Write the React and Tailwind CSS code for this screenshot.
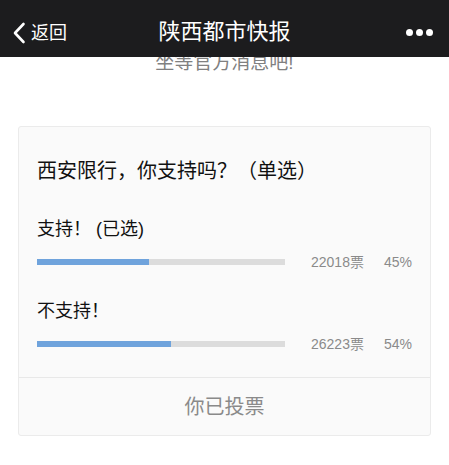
const font = { fontFamily: '"Liberation Sans", "Noto Sans CJK SC", sans-serif' };

function Bar({ pct }) {
  return (
    <div className="h-[6px] w-[248px] bg-[#dcdcdc]">
      <div className="h-full bg-[#6fa3dc]" style={{ width: `${pct}%` }} />
    </div>
  );
}

function Option({ label, votes, pct, fill }) {
  return (
    <div>
      <div className="text-[18px] leading-[24px] text-[#111]">{label}</div>
      <div className="mt-[12px] flex items-center">
        <Bar pct={fill} />
        <span className="ml-[26px] text-[14px] leading-[18px] text-[#8a8a8a]">{votes}票</span>
        <span className="ml-auto text-[14px] leading-[18px] text-[#8a8a8a]">{pct}%</span>
      </div>
    </div>
  );
}

export default function App() {
  return (
    <div className="h-[465px] w-[449px] overflow-hidden bg-white" style={font}>
      {/* navigation bar */}
      <div className="relative flex h-[57px] items-center overflow-hidden bg-[#1c1c1e] text-white">
        <div className="absolute left-[60px] top-[-18px] text-[13px] text-white">中国移动 </div>
        <div className="absolute left-[195px] top-[-18px] text-[13px] text-white">10:08</div>
        <div className="flex items-center pl-[12px] pt-[8px]">
          <svg width="14" height="22" viewBox="0 0 14 22" fill="none">
            <path d="M11.5 2 L3 11 L11.5 20" stroke="white" strokeWidth="2.6" strokeLinecap="round" strokeLinejoin="round" />
          </svg>
          <span className="ml-[5px] text-[18px] leading-[20px]">返回</span>
        </div>
        <div className="absolute left-0 right-0 top-[18px] text-center text-[22px] leading-[28px]">陕西都市快报</div>
        <div className="ml-auto flex gap-[3px] pr-[16px] pt-[8px]">
          <span className="h-[7px] w-[7px] rounded-full bg-white" />
          <span className="h-[7px] w-[7px] rounded-full bg-white" />
          <span className="h-[7px] w-[7px] rounded-full bg-white" />
        </div>
      </div>

      {/* trailing line of the article, partly hidden under the bar */}
      <div className="h-[19px] overflow-hidden">
        <div className="-mt-[7px] text-center text-[19px] leading-[26px] text-[#808080]">坐等官方消息吧!</div>
      </div>

      {/* vote card */}
      <div className="mx-[18px] mt-[50px] rounded-[3px] border border-[#ebebeb] bg-[#fafafa]">
        <div className="px-[18px] pt-[30px] pb-[24px]">
          <div className="text-[20px] leading-[28px] text-[#111]">西安限行，你支持吗？（单选）</div>
          <div className="mt-[32px]">
            <Option label="支持！ (已选)" votes="22018" pct="45" fill={45} />
          </div>
          <div className="mt-[28px]">
            <Option label="不支持！" votes="26223" pct="54" fill={54} />
          </div>
        </div>
        <div className="flex h-[58px] items-center justify-center border-t border-[#e8e8e8] text-[20px] text-[#8a8a8a]">
          你已投票
        </div>
      </div>
    </div>
  );
}
